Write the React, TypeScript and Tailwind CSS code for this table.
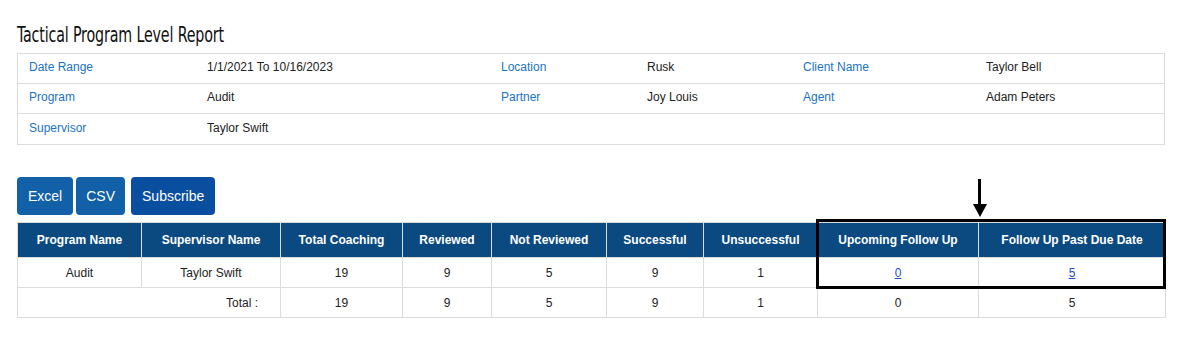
import React from 'react'

const info = [
  [
    ['Date Range', '1/1/2021 To 10/16/2023'],
    ['Location', 'Rusk'],
    ['Client Name', 'Taylor Bell'],
  ],
  [
    ['Program', 'Audit'],
    ['Partner', 'Joy Louis'],
    ['Agent', 'Adam Peters'],
  ],
  [['Supervisor', 'Taylor Swift'], ['', ''], ['', '']],
]

const columns = [
  { title: 'Program Name', w: 'w-[124px]' },
  { title: 'Supervisor Name', w: 'w-[139px]' },
  { title: 'Total Coaching', w: 'w-[122px]' },
  { title: 'Reviewed', w: 'w-[89px]' },
  { title: 'Not Reviewed', w: 'w-[115px]' },
  { title: 'Successful', w: 'w-[97px]' },
  { title: 'Unsuccessful', w: 'w-[114px]' },
  { title: 'Upcoming Follow Up', w: 'w-[161px]' },
  { title: 'Follow Up Past Due Date', w: 'w-[187px]' },
]

function Arrow() {
  return (
    <svg width="16" height="40" viewBox="0 0 16 40" className="absolute left-[955px] top-[-43px]">
      <rect x="6" y="0" width="3" height="27" fill="#000" />
      <polygon points="1,25 15,25 8,38" fill="#000" />
    </svg>
  )
}

export default function App() {
  return (
    <div className="min-h-[355px] bg-white pl-[17px] pt-[22px] font-['Liberation_Sans',Arial,sans-serif] text-[12px] text-[#222]">
      <h1 className="mb-[6px] h-[25px] origin-left scale-x-[0.72] font-['DejaVu_Sans_Condensed','Liberation_Sans',sans-serif] text-[22px] leading-[25px] tracking-[-0.2px] whitespace-nowrap text-[#111]">
        Tactical Program Level Report
      </h1>

      <div className="w-[1148px] border border-[#dcdcdc]">
        {info.map((row, i) => (
          <div
            key={i}
            className={`flex h-[30px] items-center pb-[3px] ${i < info.length - 1 ? 'border-b border-[#dcdcdc]' : ''}`}
          >
            <span className="w-[189px] pl-[11px] text-[#1a73c6]">{row[0][0]}</span>
            <span className="w-[294px]">{row[0][1]}</span>
            <span className="w-[146px] text-[#1a73c6]">{row[1][0]}</span>
            <span className="w-[156px]">{row[1][1]}</span>
            <span className="w-[183px] text-[#1a73c6]">{row[2][0]}</span>
            <span>{row[2][1]}</span>
          </div>
        ))}
      </div>

      <div className="mt-[32px] flex">
        <button className="h-[38px] rounded-[4px] bg-[#1160a8] px-[11px] text-[14px] text-white">Excel</button>
        <button className="ml-[3px] h-[38px] rounded-[4px] bg-[#1160a8] px-[10px] text-[14px] text-white">CSV</button>
        <button className="ml-[6px] h-[38px] rounded-[4px] bg-[#0a4ea0] px-[11px] text-[14px] text-white">Subscribe</button>
      </div>

      <div className="relative mt-[7px] w-[1148px]">
        <Arrow />
        <table className="w-[1148px] table-fixed border-collapse text-center">
          <thead>
            <tr className="h-[35px] bg-[#0b4a80] text-white">
              {columns.map((c) => (
                <th key={c.title} className={`${c.w} border border-[#dcdcdc] font-bold`}>
                  {c.title}
                </th>
              ))}
            </tr>
          </thead>
          <tbody>
            <tr className="h-[30px]">
              <td className="border border-[#dcdcdc]">Audit</td>
              <td className="border border-[#dcdcdc]">Taylor Swift</td>
              <td className="border border-[#dcdcdc]">19</td>
              <td className="border border-[#dcdcdc]">9</td>
              <td className="border border-[#dcdcdc]">5</td>
              <td className="border border-[#dcdcdc]">9</td>
              <td className="border border-[#dcdcdc]">1</td>
              <td className="border border-[#dcdcdc]">
                <a href="#" className="text-[#1a4fd6] underline">0</a>
              </td>
              <td className="border border-[#dcdcdc]">
                <a href="#" className="text-[#1a4fd6] underline">5</a>
              </td>
            </tr>
            <tr className="h-[30px]">
              <td colSpan={2} className="border border-[#dcdcdc] pr-[22px] text-right">Total :</td>
              <td className="border border-[#dcdcdc]">19</td>
              <td className="border border-[#dcdcdc]">9</td>
              <td className="border border-[#dcdcdc]">5</td>
              <td className="border border-[#dcdcdc]">9</td>
              <td className="border border-[#dcdcdc]">1</td>
              <td className="border border-[#dcdcdc]">0</td>
              <td className="border border-[#dcdcdc]">5</td>
            </tr>
          </tbody>
        </table>
        <div className="pointer-events-none absolute left-[799px] top-[-3px] h-[70px] w-[350px] border-[3px] border-black" />
      </div>
    </div>
  )
}
